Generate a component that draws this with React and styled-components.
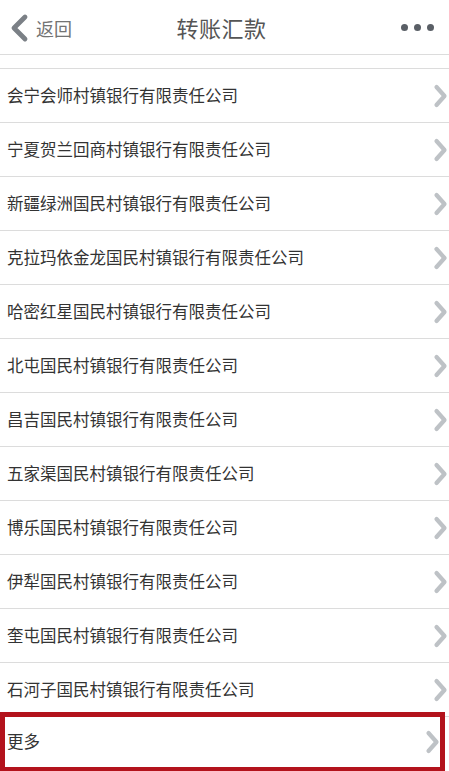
import React from "react";
import styled, { createGlobalStyle } from "styled-components";

const Global = createGlobalStyle`
  html, body { margin: 0; padding: 0; background: #fff; }
  body { font-family: "Noto Sans CJK SC", "Noto Sans", sans-serif; }
  * { box-sizing: border-box; }
`;

const Page = styled.div`
  width: 449px;
  height: 771px;
  overflow: hidden;
  background: #fff;
  display: flex;
  flex-direction: column;
`;

const Header = styled.header`
  height: 55px;
  flex-shrink: 0;
  border-bottom: 1px solid #dcdcdc;
  display: grid;
  grid-template-columns: 1fr auto 1fr;
  align-items: center;
  padding: 0 15px 0 9px;
`;

const Back = styled.div`
  display: flex;
  align-items: center;
  gap: 7px;
  color: #737373;
  font-size: 18px;
  padding-top: 1px;
`;

const Title = styled.h1`
  margin: 0;
  font-size: 22px;
  font-weight: 400;
  color: #555;
  letter-spacing: 0.5px;
`;

const More = styled.div`
  justify-self: end;
  display: flex;
  gap: 6px;
  padding-top: 1px;
`;

const Dot = styled.span`
  width: 7px;
  height: 7px;
  border-radius: 50%;
  background: #5a5f66;
`;

const Spacer = styled.div`
  height: 14px;
  flex-shrink: 0;
  border-bottom: 1px solid #dcdcdc;
`;

const Row = styled.div`
  height: ${(p) => (p.$bare ? "49px" : "54px")};
  flex-shrink: 0;
  display: flex;
  align-items: center;
  justify-content: space-between;
  padding: 0 ${(p) => (p.$bare ? "0" : "1px")} 0 ${(p) => (p.$bare ? "2px" : "7px")};
  border-bottom: ${(p) => (p.$bare ? "none" : "1px solid #dcdcdc")};
  font-size: 16.5px;
  color: #333;
`;

const Label = styled.span`
  line-height: 1;
  padding-bottom: 1px;
`;

const Highlight = styled.div`
  margin-top: -5px;
  width: 445px;
  height: 59px;
  flex-shrink: 0;
  border: 5px solid #b3131c;
  border-bottom-width: 4px;
  overflow: hidden;
  background: #fff;
`;

const Chevron = ({ color = "#bec2c6" }) => (
  <svg width="15" height="24" viewBox="0 0 15 24" fill="none">
    <path d="M3.5 3 L11.5 12 L3.5 21" stroke={color} strokeWidth="4.2" strokeLinecap="round" strokeLinejoin="round" />
  </svg>
);

const banks = [
  "会宁会师村镇银行有限责任公司",
  "宁夏贺兰回商村镇银行有限责任公司",
  "新疆绿洲国民村镇银行有限责任公司",
  "克拉玛依金龙国民村镇银行有限责任公司",
  "哈密红星国民村镇银行有限责任公司",
  "北屯国民村镇银行有限责任公司",
  "昌吉国民村镇银行有限责任公司",
  "五家渠国民村镇银行有限责任公司",
  "博乐国民村镇银行有限责任公司",
  "伊犁国民村镇银行有限责任公司",
  "奎屯国民村镇银行有限责任公司",
  "石河子国民村镇银行有限责任公司",
];

export default function App() {
  return (
    <Page>
      <Global />
      <Header>
        <Back>
          <svg width="20" height="30" viewBox="0 0 20 30" fill="none">
            <path d="M16 4 L5 15 L16 26" stroke="#7b8086" strokeWidth="4.8" strokeLinecap="round" strokeLinejoin="round" />
          </svg>
          <span>返回</span>
        </Back>
        <Title>转账汇款</Title>
        <More>
          <Dot />
          <Dot />
          <Dot />
        </More>
      </Header>
      <Spacer />
      {banks.map((b) => (
        <Row key={b}>
          <Label>{b}</Label>
          <Chevron />
        </Row>
      ))}
      <Highlight>
        <Row $bare>
          <Label>更多</Label>
          <Chevron />
        </Row>
      </Highlight>
    </Page>
  );
}
